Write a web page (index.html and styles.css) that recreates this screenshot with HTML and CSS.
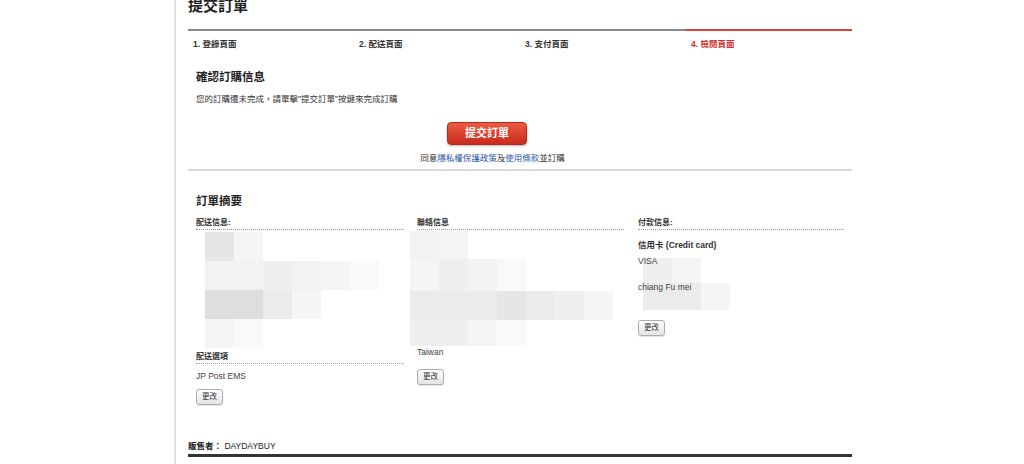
FILE: index.html
```html
<!DOCTYPE html>
<html lang="zh-Hant">
<head>
<meta charset="utf-8">
<title>提交訂單</title>
<link rel="stylesheet" href="styles.css">
</head>
<body>
<div class="page">
  <h1 class="title">提交訂單</h1>
  <div class="steps">
    <div class="step">1. 登錄頁面</div>
    <div class="step">2. 配送頁面</div>
    <div class="step">3. 支付頁面</div>
    <div class="step step-active">4. 檢閱頁面</div>
  </div>

  <div class="section">
    <h2 class="sec-title confirm-title">確認訂購信息</h2>
    <p class="desc">您的訂購還未完成，請單擊"提交訂單"按鍵來完成訂購</p>
    <div class="submit-area">
      <button class="submit-btn">提交訂單</button>
      <p class="agree">同意<a class="link">隱私權保護政策</a>及<a class="link">使用條款</a>並訂購</p>
    </div>
  </div>

  <div class="sep"></div>

  <div class="section">
    <h2 class="sec-title summary-title">訂單摘要</h2>
    <div class="cols">
      <div class="col">
        <div class="col-head">配送信息:</div>
        <div class="mosaic mosaic-ship">
          <span class="s2"></span><span class="s6"></span><span></span><span></span><span></span><span></span>
          <span class="s5"></span><span class="s5"></span><span class="s4"></span><span class="s5"></span><span class="s6"></span><span class="s7"></span>
          <span class="s1"></span><span class="s1"></span><span class="s3"></span><span class="s6"></span><span></span><span></span>
          <span class="s6"></span><span class="s7"></span><span></span><span></span><span></span><span></span>
        </div>
        <div class="col-head col-head-2">配送選項</div>
        <div class="line line-ems">JP Post EMS</div>
        <button class="small-btn btn-ship">更改</button>
      </div>

      <div class="col col-mid">
        <div class="col-head">聯絡信息</div>
        <div class="mosaic mosaic-contact">
          <span class="s5"></span><span class="s6"></span><span></span><span></span><span></span><span></span><span></span>
          <span class="s6"></span><span class="s4"></span><span class="s5"></span><span class="s7"></span><span></span><span></span><span></span>
          <span class="s3"></span><span class="s3"></span><span class="s3"></span><span class="s2"></span><span class="s3"></span><span class="s4"></span><span class="s6"></span>
          <span class="s4"></span><span class="s4"></span><span class="s6"></span><span class="s7"></span><span></span><span></span><span></span>
        </div>
        <div class="line">Taiwan</div>
        <button class="small-btn btn-contact">更改</button>
      </div>

      <div class="col col-last">
        <div class="col-head">付款信息:</div>
        <div class="line line-bold card-type">信用卡 (Credit card)</div>
        <div class="card-lines">
          <div class="mosaic mosaic-card" aria-hidden="true">
            <span class="s4"></span><span class="s6"></span><span></span>
            <span class="s3"></span><span class="s3"></span><span class="s6"></span>
          </div>
          <div class="line">VISA</div>
          <div class="line line-blank"></div>
          <div class="line">chiang Fu mei</div>
          <div class="line line-blank"></div>
        </div>
        <button class="small-btn btn-card">更改</button>
      </div>
    </div>
  </div>

  <div class="seller"><b>販售者：</b> DAYDAYBUY</div>
  <div class="seller-rule"></div>
</div>
</body>
</html>
```

FILE: styles.css
```css
html, body {
  margin: 0;
  padding: 0;
  background: #fff;
}

body {
  font-family: "Liberation Sans", "Noto Sans CJK TC", sans-serif;
  color: #333;
  overflow: hidden;
}

.page {
  margin-left: 174px;
  width: 664px;
  height: 464px;
  padding-left: 12px;
  border-left: 2px solid #e2e2e2;
  overflow: hidden;
}

.title {
  margin: -3px 0 0;
  font-size: 15px;
  line-height: 18px;
  font-weight: bold;
  color: #222;
}

.steps {
  display: flex;
  margin-top: 14px;
}

.step {
  flex: 1;
  border-top: 2px solid #8a8a8a;
  padding: 8px 5px 0;
  font-size: 8.5px;
  line-height: 10px;
  font-weight: bold;
  color: #333;
}

.step-active {
  border-top-color: #d9413b;
  color: #cc3030;
}

.section {
  padding: 0 7px 0 8px;
}

.sec-title {
  margin: 0;
  font-size: 11.5px;
  line-height: 14px;
  font-weight: bold;
  color: #222;
}

.confirm-title {
  margin-top: 21px;
}

.desc {
  margin: 9px 0 0;
  font-size: 8.5px;
  line-height: 12px;
  color: #333;
}

.submit-area {
  display: flex;
  flex-direction: column;
  align-items: center;
  padding-right: 56px;
  margin-top: 17px;
}

.submit-btn {
  width: 80px;
  height: 23px;
  margin-right: 11px;
  padding: 0;
  border: 1px solid #b3291b;
  border-radius: 4px;
  background: linear-gradient(#ec5a42, #c82c1c);
  box-shadow: 0 1px 2px rgba(0, 0, 0, 0.3);
  color: #fff;
  font-family: inherit;
  font-size: 11px;
  font-weight: bold;
  line-height: 21px;
}

.agree {
  margin: 7px 0 0;
  font-size: 8.5px;
  line-height: 12px;
  color: #333;
}

.link {
  color: #2d56a8;
}

.sep {
  margin-top: 5px;
  height: 2px;
  background: #dadada;
}

.summary-title {
  margin-top: 23px;
}

.cols {
  display: grid;
  grid-template-columns: 208px 208px 208px;
  column-gap: 12px;
  margin-top: 10px;
  align-items: start;
}

.col {
  display: flex;
  flex-direction: column;
  align-items: flex-start;
}

.col-mid {
  padding-left: 1px;
}

.col-last {
  padding-left: 2px;
}

.col-head {
  align-self: stretch;
  font-size: 8px;
  line-height: 10px;
  font-weight: bold;
  color: #333;
  padding-bottom: 1px;
  border-bottom: 1px dotted #9a9a9a;
}

.col-head-2 {
  margin-top: 4px;
}

.line {
  font-size: 8.5px;
  line-height: 12px;
  color: #444;
}

.line-bold {
  font-weight: bold;
  color: #333;
}

.line-ems {
  margin-top: 6px;
}

.line-blank {
  height: 12px;
}

.mosaic {
  display: grid;
  grid-auto-rows: 29px;
  filter: blur(0.7px);
}

.mosaic-ship {
  grid-template-columns: repeat(6, 29px);
  margin: 2px 0 0 9px;
}

.mosaic-contact {
  grid-template-columns: repeat(7, 29px);
  grid-template-rows: 28px 32px 29px 26px;
  margin: 1px 0 0 -7px;
}

.mosaic-card {
  position: absolute;
  left: 5px;
  top: 3px;
  z-index: 0;
  grid-template-columns: repeat(3, 29px);
  grid-template-rows: 25px 27px;
}

.s1 { background: #dedede; }
.s2 { background: #e6e6e6; }
.s3 { background: #ebebeb; }
.s4 { background: #efefef; }
.s5 { background: #f2f2f2; }
.s6 { background: #f5f5f5; }
.s7 { background: #f9f9f9; }

.card-type {
  margin-top: 9px;
}

.card-lines {
  position: relative;
  margin-top: 4px;
}

.card-lines .line {
  position: relative;
  z-index: 1;
}

.card-lines .line:nth-child(4) {
  margin-top: 2px;
}

.small-btn {
  width: 27px;
  height: 16px;
  padding: 0;
  border: 1px solid #adadad;
  border-radius: 3px;
  background: linear-gradient(#ffffff, #e4e4e4);
  box-shadow: 0 1px 1px rgba(0, 0, 0, 0.12);
  color: #333;
  font-family: inherit;
  font-size: 7.5px;
  line-height: 14px;
}

.btn-ship {
  margin-top: 7px;
}

.btn-contact {
  margin-top: 11px;
}

.btn-card {
  margin-top: 15px;
}

.seller {
  margin-top: 35px;
  font-size: 8.5px;
  line-height: 12px;
  color: #222;
}

.seller-rule {
  margin-top: 2px;
  height: 3px;
  background: #333;
}
```
